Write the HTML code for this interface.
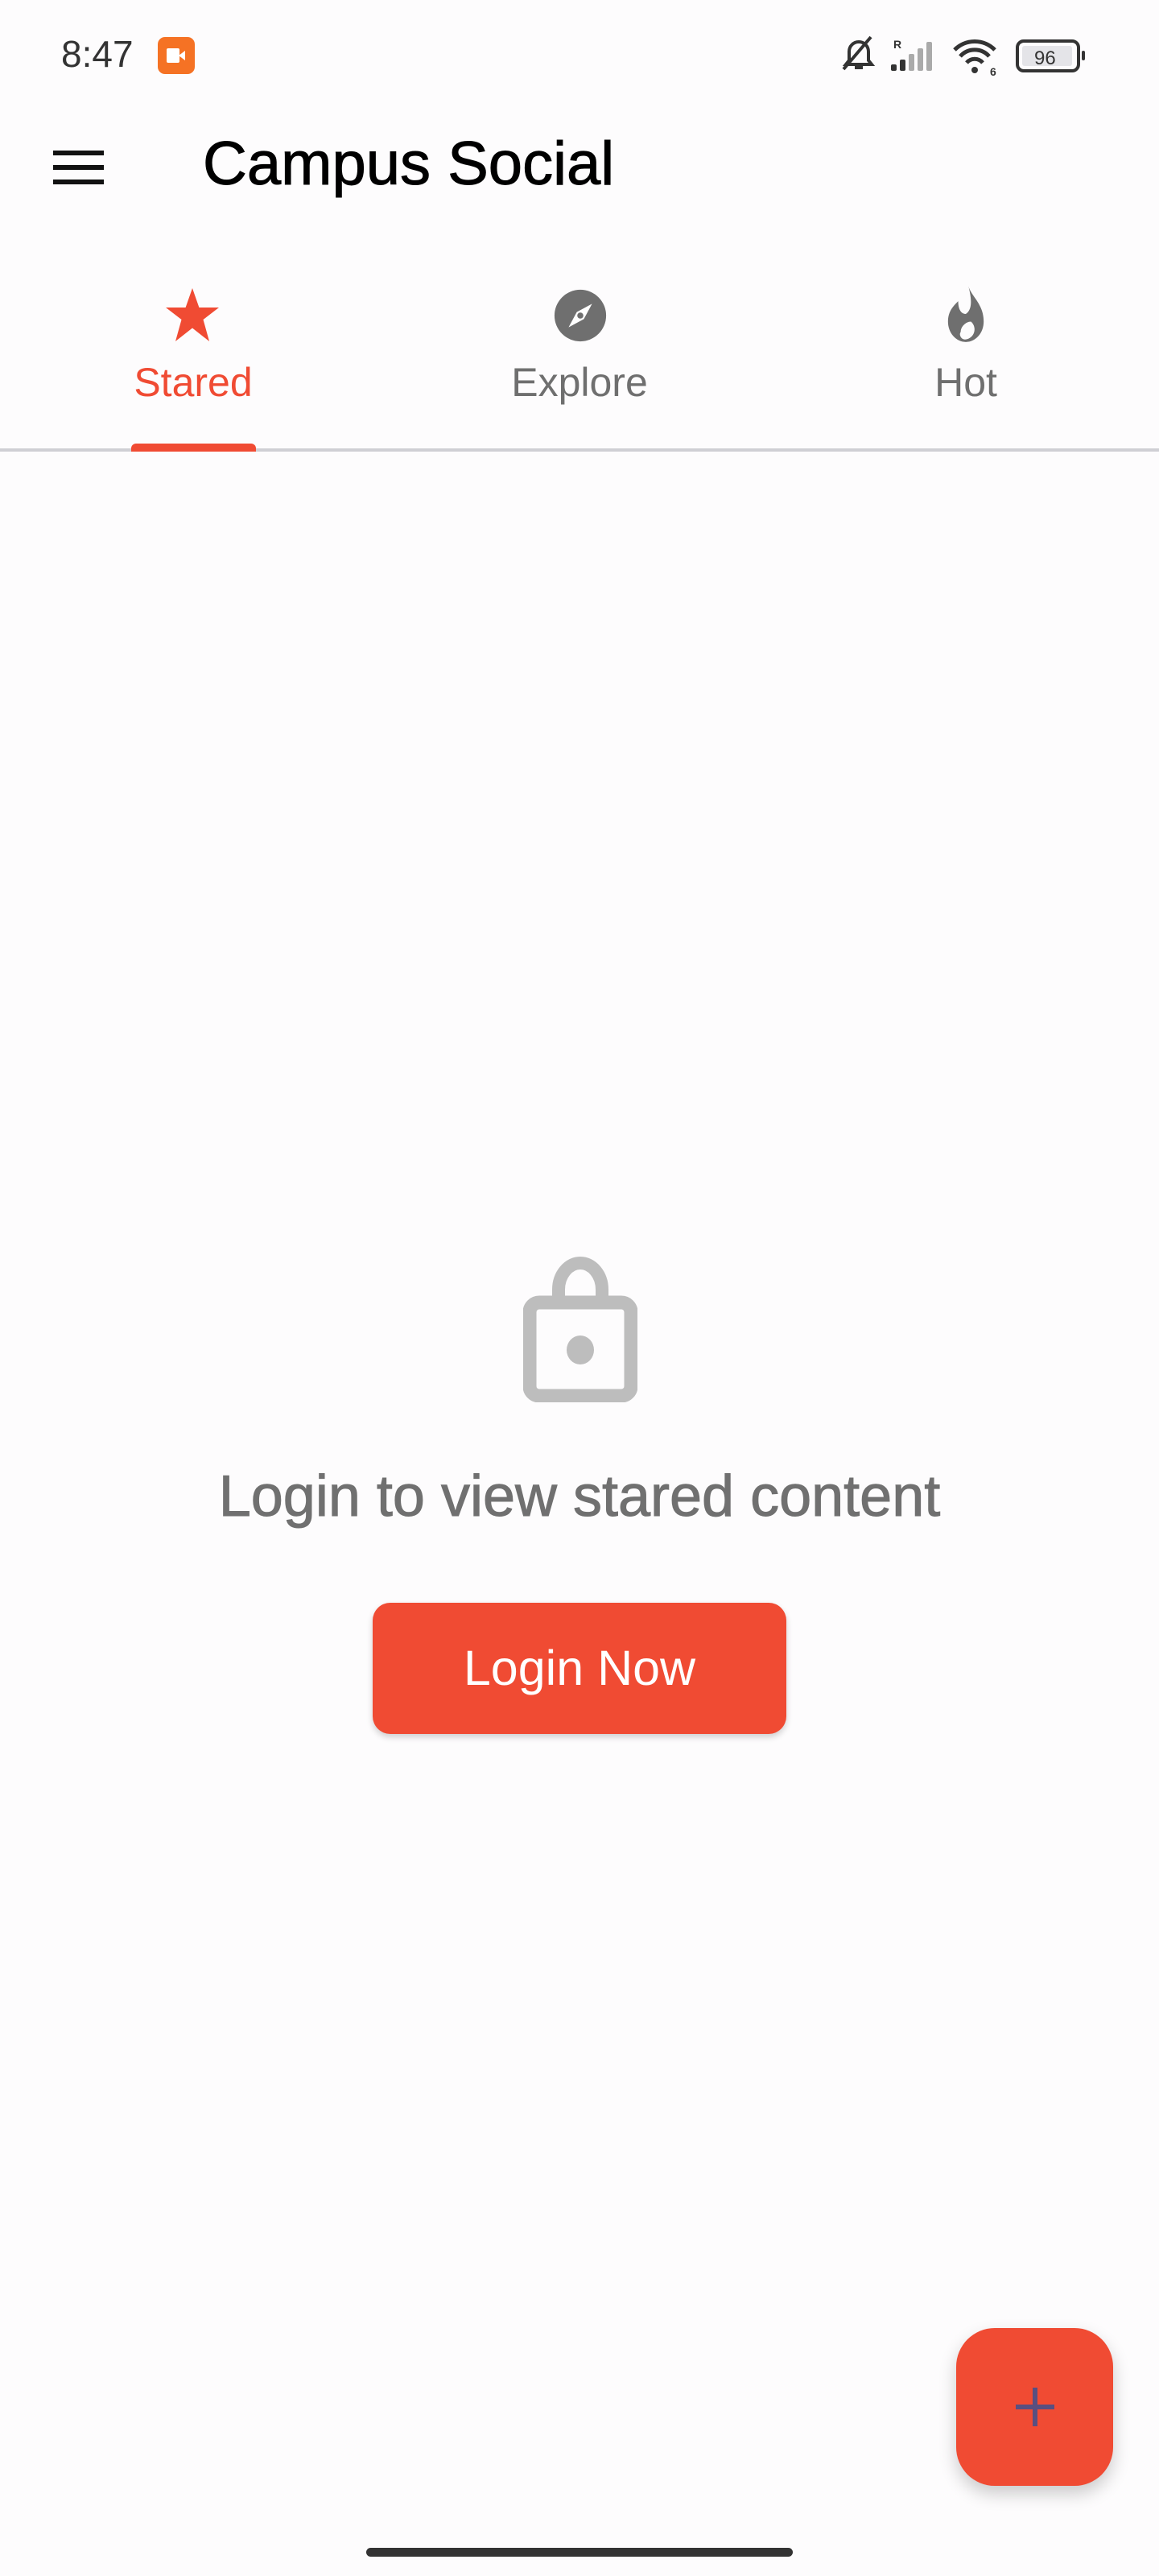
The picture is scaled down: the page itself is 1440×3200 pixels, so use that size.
<!DOCTYPE html>
<html><head><meta charset="utf-8"><style>
*{margin:0;padding:0;box-sizing:border-box}
body{width:1440px;height:3200px;background:#fdfcfd;font-family:"Liberation Sans",sans-serif;position:relative;overflow:hidden}
.a{position:absolute}
</style></head><body>
<div class="a" style="left:76px;top:44px;font-size:46px;color:#333;line-height:1">8:47</div>
<div class="a" style="left:196px;top:46px;width:46px;height:46px;background:#f57224;border-radius:9px"></div>
<div class="a" style="left:207px;top:60px;width:16px;height:18px;background:#fff;border-radius:2px"></div>
<div class="a" style="left:222px;top:63px;width:0;height:0;border-top:6px solid transparent;border-bottom:6px solid transparent;border-right:8px solid #fff"></div>
<svg class="a" style="left:1040px;top:40px" width="310" height="55" viewBox="0 0 310 55">
 <path d="M15 35 V24 a12 12 0 0 1 24 0 V35 l4 5 H11 z M22 44 h10" fill="none" stroke="#333" stroke-width="4"/>
 <line x1="8" y1="46" x2="42" y2="6" stroke="#333" stroke-width="4"/>
 <text x="70" y="20" font-size="14" font-weight="bold" fill="#333" font-family="Liberation Sans">R</text>
 <rect x="67" y="40" width="7" height="8" rx="2" fill="#333"/>
 <rect x="78" y="34" width="7" height="14" rx="2" fill="#333"/>
 <rect x="89" y="27" width="7" height="21" rx="2" fill="#aaa"/>
 <rect x="100" y="20" width="7" height="28" rx="2" fill="#aaa"/>
 <rect x="111" y="12" width="7" height="36" rx="2" fill="#aaa"/>
 <path d="M146 22 a35 35 0 0 1 50 0 M153 30 a24 24 0 0 1 36 0 M161 38 a13 13 0 0 1 20 0" fill="none" stroke="#333" stroke-width="5"/>
 <circle cx="171" cy="47" r="4" fill="#333"/>
 <text x="190" y="54" font-size="14" font-weight="bold" fill="#333">6</text>
 <rect x="224" y="11" width="76" height="37" rx="8" fill="none" stroke="#333" stroke-width="4"/>
 <rect x="230" y="17" width="62" height="25" rx="3" fill="#e4e4e8"/>
 <text x="245" y="40" font-size="24" fill="#333">96</text>
 <rect x="304" y="23" width="4" height="12" rx="2" fill="#333"/>
</svg>
<div class="a" style="left:66px;top:187px;width:63px;height:6px;background:#111"></div>
<div class="a" style="left:66px;top:205px;width:63px;height:6px;background:#111"></div>
<div class="a" style="left:66px;top:223px;width:63px;height:6px;background:#111"></div>
<div class="a" style="left:252px;top:166px;font-size:76px;color:#000;line-height:1;-webkit-text-stroke:1px #000">Campus Social</div>

<svg class="a" style="left:203px;top:355px" width="72" height="72" viewBox="0 0 24 24"><path d="M12 1 L14.8 9 H23 L16.5 14 L19 23 L12 17.5 L5 23 L7.5 14 L1 9 H9.2z" fill="#f04b33"/></svg>
<svg class="a" style="left:686px;top:357px" width="70" height="70" viewBox="0 0 24 24"><circle cx="12" cy="12" r="11" fill="#6f6f6f"/><path d="M17 7 L13.5 13.5 L7 17 L10.5 10.5z" fill="#fff"/><circle cx="12" cy="12" r="1.3" fill="#6f6f6f"/></svg>
<svg class="a" style="left:1168px;top:352px" width="64" height="76" viewBox="0 0 20 24"><path d="M11 1 C12 5 17 8 17 15 A7 8 0 0 1 3 15 C3 11 5 9 7 7 C7 10 8 12 10 12 C13 10 12 5 11 1z M10 22 A4 4 0 0 0 12 15 C10 15 8 17 8 19 A2 2 0 0 0 10 22z" fill="#6f6f6f" fill-rule="evenodd"/></svg>
<div class="a" style="left:0;width:480px;top:450px;text-align:center;font-size:50px;color:#f04b33;line-height:1">Stared</div>
<div class="a" style="left:480px;width:480px;top:450px;text-align:center;font-size:50px;color:#6f6f6f;line-height:1">Explore</div>
<div class="a" style="left:960px;width:480px;top:450px;text-align:center;font-size:50px;color:#6f6f6f;line-height:1">Hot</div>
<div class="a" style="left:0;top:557px;width:1440px;height:4px;background:#cfcfd4"></div>
<div class="a" style="left:163px;top:551px;width:155px;height:10px;background:#f04b33;border-radius:6px 6px 0 0"></div>

<svg class="a" style="left:650px;top:1560px" width="142" height="182" viewBox="0 0 142 182">
 <path d="M44 52 V42 a27 33 0 0 1 54 0 V52" fill="none" stroke="#bdbdbd" stroke-width="16"/>
 <rect x="8" y="58" width="126" height="116" rx="12" fill="none" stroke="#bdbdbd" stroke-width="17"/>
 <ellipse cx="71" cy="117" rx="17" ry="18" fill="#bdbdbd"/>
</svg>
<div class="a" style="left:0;width:1440px;top:1816px;text-align:center;font-size:72px;color:#707070;line-height:1.2;-webkit-text-stroke:1px #707070">Login to view stared content</div>
<div class="a" style="left:463px;top:1991px;width:514px;height:163px;background:#f04b33;border-radius:22px;box-shadow:0 4px 8px rgba(0,0,0,.18);color:#fff;font-size:61px;text-align:center;line-height:163px">Login Now</div>

<div class="a" style="left:1188px;top:2892px;width:195px;height:196px;background:#f04b33;border-radius:48px;box-shadow:0 10px 22px rgba(0,0,0,.2)"></div>
<div class="a" style="left:1262px;top:2987px;width:48px;height:6px;background:#5a4f80"></div>
<div class="a" style="left:1283px;top:2966px;width:6px;height:48px;background:#5a4f80"></div>

<div class="a" style="left:455px;top:3165px;width:530px;height:11px;background:#333;border-radius:6px"></div>
</body></html>
